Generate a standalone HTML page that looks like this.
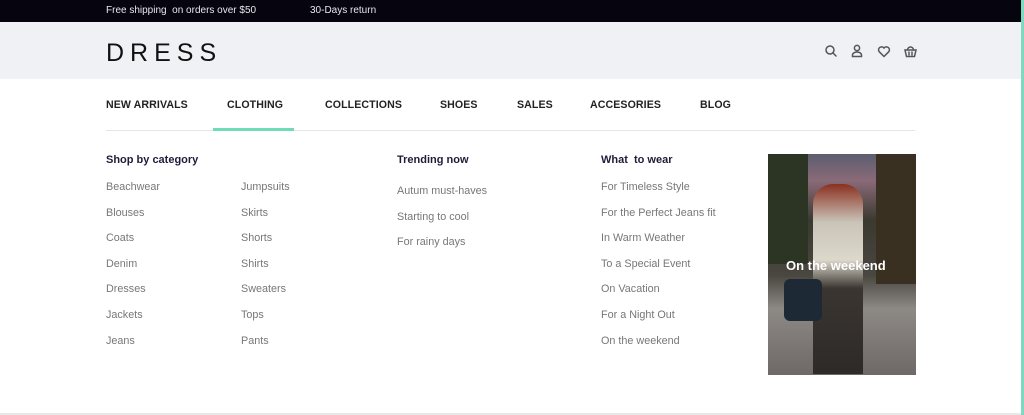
<!DOCTYPE html>
<html><head><meta charset="utf-8"><style>
*{margin:0;padding:0;box-sizing:border-box}
body{width:1024px;height:415px;background:#fff;font-family:"Liberation Sans",sans-serif;position:relative;overflow:hidden}
.a{position:absolute;white-space:nowrap}
.top{left:0;top:0;width:1021px;height:22px;background:#05040f}
.tt{color:#e8e8ee;font-size:10px;top:5px}
.hdr{left:0;top:22px;width:1021px;height:57px;background:#f0f1f5}
.logo{left:106px;top:39px;font-size:25px;letter-spacing:6px;color:#111;font-weight:400}
.nav{top:99px;font-size:10.6px;color:#222;font-weight:bold;letter-spacing:0.1px}
.h{top:154px;font-size:11px;font-weight:bold;color:#1e1d3a}
.l{font-size:10.8px;color:#777}
</style></head><body>
<div class="a top"></div>
<div class="a tt" style="left:106px">Free shipping &nbsp;on orders over $50</div>
<div class="a tt" style="left:310px">30-Days return</div>
<div class="a hdr"></div>
<div class="a logo">DRESS</div>
<svg class="a" style="left:823px;top:43px" width="100" height="16" viewBox="0 0 100 16" fill="none" stroke="#555" stroke-width="1.5" stroke-linecap="round">
<circle cx="7" cy="7" r="4"/><path d="M10 10l3 3"/>
<circle cx="34" cy="5" r="2.6"/><path d="M29.5 13.5v-1.5a4.5 3 0 0 1 9 0v1.5z"/>
<path d="M61 13.5l-4.8-4.8a2.9 2.9 0 0 1 4.8-3.7a2.9 2.9 0 0 1 4.8 3.7z"/>
<path d="M82 7h11l-1.5 6.5h-8z"/><path d="M84.5 7a3 3 0 0 1 6 0"/><path d="M86 9v3M89 9v3"/>
</svg>
<div class="a nav" style="left:106px">NEW ARRIVALS</div>
<div class="a nav" style="left:227px">CLOTHING</div>
<div class="a nav" style="left:325px">COLLECTIONS</div>
<div class="a nav" style="left:440px">SHOES</div>
<div class="a nav" style="left:517px">SALES</div>
<div class="a nav" style="left:590px">ACCESORIES</div>
<div class="a nav" style="left:700px">BLOG</div>
<div class="a" style="left:106px;top:130px;width:809px;height:1px;background:#e5e5e5"></div>
<div class="a" style="left:213px;top:128px;width:81px;height:3px;background:#6fdcb8"></div>
<div class="a h" style="left:106px">Shop by category</div>
<div class="a h" style="left:397px">Trending now</div>
<div class="a h" style="left:601px">What &nbsp;to wear</div>
<div class="a l" style="left:106px;top:175px;line-height:25.6px">Beachwear<br>Blouses<br>Coats<br>Denim<br>Dresses<br>Jackets<br>Jeans</div>
<div class="a l" style="left:241px;top:175px;line-height:25.6px">Jumpsuits<br>Skirts<br>Shorts<br>Shirts<br>Sweaters<br>Tops<br>Pants</div>
<div class="a l" style="left:397px;top:179px;line-height:25.6px">Autum must-haves<br>Starting to cool<br>For rainy days</div>
<div class="a l" style="left:601px;top:175px;line-height:25.6px">For Timeless Style<br>For the Perfect Jeans fit<br>In Warm Weather<br>To a Special Event<br>On Vacation<br>For a Night Out<br>On the weekend</div>
<div class="a" style="left:768px;top:154px;width:148px;height:221px;overflow:hidden;background:linear-gradient(180deg,#5c5e70 0%,#8a6a78 12%,#3a3a30 30%,#4a4640 55%,#8d8985 70%,#6e6866 100%)">
<div class="a" style="left:0;top:0;width:40px;height:110px;background:#2c3424"></div>
<div class="a" style="left:108px;top:0;width:40px;height:130px;background:#3a3022"></div>
<div class="a" style="left:45px;top:30px;width:50px;height:190px;background:linear-gradient(#8a3020 0%,#c9c3b8 20%,#ddd8cc 40%,#3a3530 55%,#2d2a28 100%);border-radius:20px 20px 0 0"></div>
<div class="a" style="left:16px;top:125px;width:38px;height:42px;background:#1d2a36;border-radius:6px"></div>
<div class="a" style="left:18px;top:104px;color:#fff;font-size:13px;font-weight:bold">On the weekend</div>
</div>
<div class="a" style="left:1021px;top:0;width:3px;height:415px;background:#7fd9c0"></div>
<div class="a" style="left:0;top:413px;width:1021px;height:2px;background:#e6e8ea"></div>
</body></html>
